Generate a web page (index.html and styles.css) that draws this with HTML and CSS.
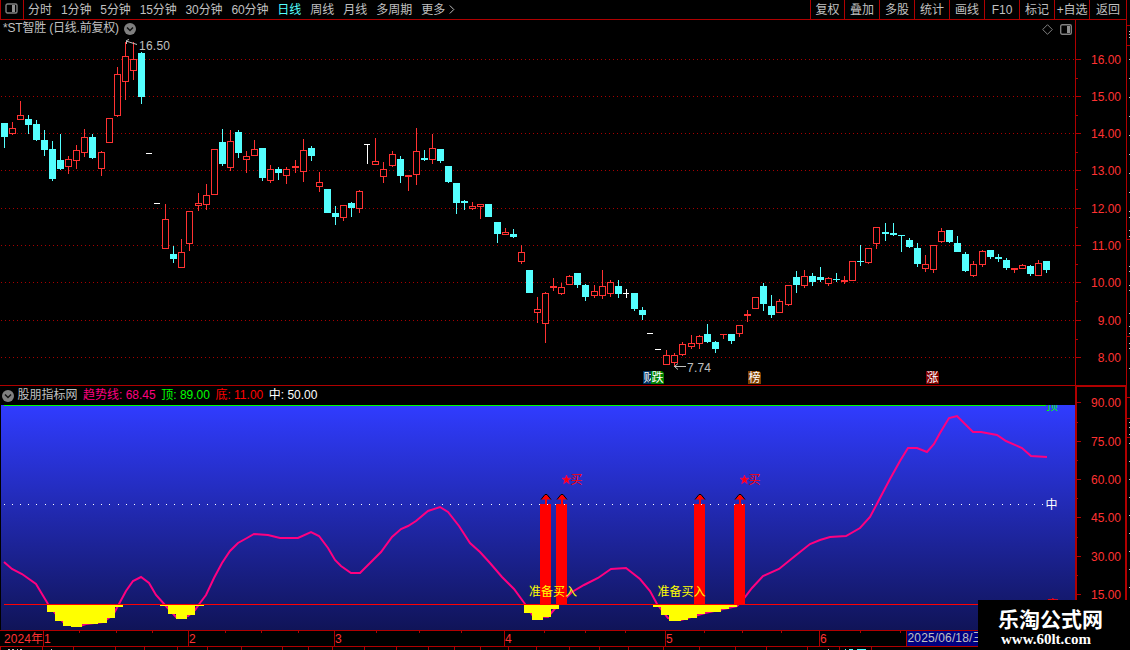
FILE: index.html
```html
<!DOCTYPE html>
<html lang="zh-CN">
<head>
    <meta charset="UTF-8">
    <meta name="viewport" content="width=device-width, initial-scale=1.0">
    <title>*ST智胜 日线</title>
    <link rel="stylesheet" href="styles.css">
</head>
<body>
    <div class="terminal">
        <div class="main">
            <div class="toolbar">
                <div class="layout-toggle">
                    <svg width="13" height="11" viewBox="0 0 13 11"><rect x="1" y="1" width="11" height="9" rx="1.5" fill="none" stroke="#808080" stroke-width="1.4"/><rect x="7" y="2" width="3" height="7" fill="#909090"/></svg>
                </div>
                <div class="periods">
                    <span>分时</span>
                    <span class="minutes">1分钟</span>
                    <span class="minutes">5分钟</span>
                    <span class="minutes">15分钟</span>
                    <span class="minutes">30分钟</span>
                    <span class="minutes">60分钟</span>
                    <span class="active">日线</span>
                    <span>周线</span>
                    <span>月线</span>
                    <span>多周期</span>
                    <span class="more">更多<svg width="6" height="9" viewBox="0 0 6 9"><path d="M0.8 0.5L4.8 4.5L0.8 8.5" fill="none" stroke="#c0c0c0"/></svg></span>
                </div>
                <div class="tools">
                    <span>复权</span>
                    <span>叠加</span>
                    <span>多股</span>
                    <span>统计</span>
                    <span>画线</span>
                    <span>F10</span>
                    <span>标记</span>
                    <span class="add">+自选</span>
                    <span>返回</span>
                </div>
            </div>

            <div class="panel price">
                <div class="plot">
                    <div class="title">
                        <span class="stock">*ST智胜 (日线.前复权)</span>
                        <svg class="drop" width="12" height="12" viewBox="0 0 12 12"><circle cx="6" cy="6" r="6" fill="#808080"/><path d="M3 4.5L6 7.5L9 4.5" fill="none" stroke="#111" stroke-width="1.5"/></svg>
                        <div class="corner">
                            <svg width="11" height="11" viewBox="0 0 11 11"><path d="M5.5 0.7L10.3 5.5L5.5 10.3L0.7 5.5Z" fill="none" stroke="#808080"/></svg>
                            <svg width="12" height="11" viewBox="0 0 12 11"><rect x="0.7" y="0.7" width="10.6" height="9.6" rx="1.5" fill="none" stroke="#808080" stroke-width="1.4"/><rect x="7" y="2" width="3" height="7" fill="#909090"/></svg>
                        </div>
                    </div>
                    <svg id="candles" width="1075" height="347" viewBox="0 38 1075 347"></svg>
                </div>
                <svg id="price-axis" class="axis" width="51" height="365" viewBox="1075 20 51 365"></svg>
            </div>

            <div class="panel indicator">
                <div class="plot">
                    <div class="legend">
                        <svg class="drop" width="12" height="12" viewBox="0 0 12 12"><circle cx="6" cy="6" r="6" fill="#808080"/><path d="M3 4.5L6 7.5L9 4.5" fill="none" stroke="#111" stroke-width="1.5"/></svg>
                        <span class="name">股朋指标网</span>
                        <span class="trend">趋势线: 68.45</span>
                        <span class="top">顶: 89.00</span>
                        <span class="bottom">底: 11.00</span>
                        <span class="middle">中: 50.00</span>
                    </div>
                    <svg id="trend" width="1075" height="225" viewBox="0 405 1075 225"></svg>
                </div>
                <svg id="trend-axis" class="axis" width="51" height="245" viewBox="1075 385 51 245"></svg>
            </div>

            <svg id="dates" width="1126" height="20" viewBox="0 630 1126 20"></svg>
        </div>
        <svg id="edge" width="4" height="650" viewBox="1126 0 4 650"></svg>

        <div class="watermark">
            <div class="site-name">乐淘公式网</div>
            <div class="site-url">www.60lt.com</div>
        </div>
    </div>
    <script src="chart.js"></script>
</body>
</html>
```
FILE: styles.css
```css
body {
    margin: 0;
    background-color: #000;
    color: #c0c0c0;
    font-family: "Liberation Sans", "Noto Sans CJK SC", sans-serif;
    font-size: 12px;
    overflow: hidden;
}
svg {
    display: block;
    flex: none;
}
svg text {
    font-family: "Liberation Sans", "Noto Sans CJK SC", sans-serif;
    font-size: 12px;
}
.terminal {
    position: relative;
    display: flex;
    width: 1130px;
    height: 650px;
    overflow: hidden;
}
.main {
    display: flex;
    flex-direction: column;
    width: 1126px;
}
.toolbar {
    display: flex;
    box-sizing: border-box;
    height: 20px;
    line-height: 20px;
    border-bottom: 1px solid #b00000;
    white-space: nowrap;
}
.layout-toggle {
    box-sizing: border-box;
    width: 24px;
    padding: 3px 0 0 4px;
    border-left: 1px solid #b00000;
    border-right: 1px solid #b00000;
}
.periods {
    display: flex;
    gap: 9px;
    padding-left: 4px;
}
.minutes {
    letter-spacing: -0.12px;
}
.periods .active {
    color: #54ffff;
}
.more {
    display: flex;
    align-items: center;
    gap: 4px;
}
.tools {
    display: flex;
    margin-left: auto;
}
.tools span {
    box-sizing: border-box;
    width: 35px;
    border-left: 1px solid #b00000;
    text-align: center;
}
.tools span:first-child {
    width: 34px;
}
.tools span:last-child {
    width: 37px;
}
.tools .add {
    letter-spacing: -0.2px;
}
.panel {
    display: flex;
}
.price {
    height: 365px;
    border-bottom: 1px solid #b00000;
}
.indicator {
    height: 244px;
}
.indicator .axis {
    margin-top: -1px;
}
.title {
    display: flex;
    align-items: center;
    height: 18px;
    padding-left: 3px;
    gap: 5px;
    line-height: 16px;
}
.stock {
    width: 116px;
    padding-bottom: 2px;
    letter-spacing: -0.2px;
    white-space: nowrap;
}
.corner {
    display: flex;
    gap: 7px;
    margin-left: auto;
    padding-right: 3px;
}
.legend {
    display: flex;
    align-items: center;
    height: 19px;
    padding: 0 0 0 2px;
    line-height: 17px;
    gap: 5.5px;
    white-space: nowrap;
}
.legend .name {
    margin-left: -2px;
}
.legend .trend {
    color: #ff0080;
}
.legend .top {
    color: #00ff00;
}
.legend .bottom {
    color: #ff0000;
}
.legend .middle {
    color: #fff;
}
.watermark {
    position: absolute;
    right: 0;
    bottom: 0;
    box-sizing: border-box;
    width: 152px;
    height: 50px;
    padding: 6px 0 0 20px;
    background-color: #000;
    color: #fff;
    font-weight: bold;
}
.site-name {
    font-family: "Noto Sans CJK SC", sans-serif;
    font-size: 21px;
    line-height: 24px;
}
.site-url {
    padding-left: 3px;
    font-family: "Liberation Serif", serif;
    font-size: 15px;
    line-height: 18px;
}
```
FILE: chart.js
```js
const RED = '#ff3232';
const CYAN = '#54ffff';
const LINE = '#b00000';

// x, high, body top, body bottom, low, direction (u = up, d = down)
const candles = [
    [1,123,123,137,148,'d'], [9,122,128,134,135,'u'], [17,101,115,120,120,'u'], [25,115,119,125,134,'d'],
    [33,120,124,140,141,'d'], [41,130,140,150,156,'d'], [49,141,149,179,181,'d'], [57,134,160,169,170,'d'],
    [65,156,159,167,174,'u'], [73,145,150,161,169,'u'], [81,129,137,153,157,'u'], [89,134,137,158,159,'d'],
    [98,151,152,169,176,'u'], [106,118,118,143,143,'u'], [114,67,74,116,117,'u'], [122,42,56,82,100,'u'],
    [130,42,59,71,80,'u'], [138,52,53,97,104,'d'], [162,204,219,249,249,'u'], [170,246,254,259,263,'d'],
    [178,239,252,268,268,'u'], [186,211,211,244,251,'u'], [195,193,203,206,211,'u'], [203,184,195,205,210,'u'],
    [211,149,149,195,195,'u'], [219,129,142,164,166,'d'], [227,130,141,168,171,'u'], [235,130,132,153,158,'d'],
    [243,151,156,160,173,'u'], [251,140,149,156,156,'u'], [259,148,148,178,181,'d'], [267,165,169,181,183,'u'],
    [275,167,169,173,180,'d'], [283,167,169,176,184,'u'], [292,160,166,168,173,'u'], [300,139,150,172,182,'u'],
    [308,146,148,156,161,'d'], [316,172,182,187,192,'u'], [324,189,189,213,213,'d'], [332,206,213,217,225,'d'],
    [340,205,205,218,221,'u'], [348,202,203,208,217,'d'], [356,190,191,209,213,'u'], [372,138,161,165,165,'u'],
    [380,162,169,177,183,'u'], [389,151,154,166,167,'u'], [397,156,159,176,183,'d'], [405,175,175,177,191,'u'],
    [413,128,151,175,185,'u'], [421,150,158,160,161,'d'], [429,134,148,160,164,'u'], [437,149,149,161,163,'d'],
    [445,166,166,182,183,'d'], [453,183,183,203,214,'d'], [461,200,201,203,210,'d'], [469,202,206,209,210,'u'],
    [477,204,204,207,219,'u'], [485,204,204,217,217,'d'], [494,222,222,234,243,'d'], [502,228,232,235,235,'u'],
    [510,229,234,237,238,'d'], [518,245,252,262,264,'u'], [526,270,270,293,293,'d'], [534,297,309,313,323,'u'],
    [542,292,293,324,343,'u'], [550,278,286,288,291,'u'], [558,283,287,294,295,'u'], [566,275,276,285,285,'u'],
    [574,273,273,285,288,'d'], [582,284,285,297,301,'d'], [591,285,291,296,298,'u'], [599,270,286,296,299,'u'],
    [607,280,282,294,297,'u'], [615,280,286,294,298,'d'], [631,293,293,309,311,'d'], [639,307,310,315,320,'d'],
    [663,350,355,365,365,'u'], [671,353,355,363,366,'u'], [679,342,344,355,356,'u'], [688,335,343,347,349,'u'],
    [696,335,336,344,349,'u'], [704,324,334,342,343,'d'], [712,341,342,349,353,'d'], [720,334,334,335,339,'u'],
    [728,334,334,341,344,'d'], [736,325,325,334,337,'u'], [744,310,314,316,322,'u'], [752,297,297,309,309,'u'],
    [760,283,286,304,311,'d'], [768,295,306,315,318,'d'], [776,299,301,313,313,'u'], [785,285,285,305,306,'u'],
    [793,271,277,285,293,'d'], [801,270,276,286,288,'u'], [809,273,276,282,286,'d'], [817,267,277,280,282,'d'],
    [825,277,278,284,286,'u'], [833,273,279,280,282,'d'], [841,276,280,282,284,'u'], [849,261,261,281,281,'u'],
    [857,245,261,262,266,'d'], [865,248,248,263,264,'u'], [873,227,227,244,249,'u'], [882,223,232,234,241,'d'],
    [890,223,233,235,236,'d'], [898,235,235,236,252,'d'], [906,238,240,247,248,'d'], [914,243,248,264,267,'d'],
    [922,255,264,269,272,'u'], [930,245,245,270,273,'u'], [938,228,231,242,243,'u'], [946,230,230,242,243,'d'],
    [954,236,243,252,252,'d'], [962,252,254,271,272,'d'], [970,261,264,276,277,'u'], [979,250,251,265,267,'u'],
    [987,250,250,257,259,'d'], [995,254,257,259,262,'d'], [1003,258,260,268,270,'d'], [1011,268,268,270,273,'u'],
    [1019,264,265,269,269,'u'], [1027,265,266,274,276,'d'], [1035,260,263,276,276,'u'], [1043,261,261,270,273,'d']
];

// days that opened and closed at the same price: x, y, stem top, stem bottom
const flats = [
    [146,153,153,153], [154,203,203,203], [364,144,144,164],
    [623,293,289,298], [647,333,333,333], [655,349,349,349]
];

const trend = [
    [4,562],[12,569],[22,574],[36,584],[42,594],[48,604],[55,613],[65,624],[80,626],[86,624],[103,622],[113,615],
    [119,604],[126,591],[133,581],[141,577],[149,583],[156,595],[165,605],[176,617],[188,616],[195,610],[200,603],
    [206,595],[214,578],[222,563],[230,551],[238,543],[247,538],[254,534],[268,535],[280,538],[298,538],[311,532],
    [319,536],[328,548],[335,560],[341,566],[351,573],[360,573],[372,561],[381,552],[392,537],[401,529],[408,526],
    [416,521],[428,511],[440,507],[448,512],[459,526],[470,543],[480,552],[490,563],[502,577],[514,589],[525,604],
    [533,616],[548,617],[558,605],[567,597],[572,592],[584,585],[598,578],[611,569],[626,568],[640,579],[650,591],
    [657,604],[668,618],[681,620],[705,613],[737,606],[745,597],[752,588],[763,576],[779,569],[795,556],[810,544],
    [820,540],[830,537],[846,536],[860,528],[870,517],[880,498],[890,479],[900,461],[908,448],[917,448],[927,452],
    [934,444],[940,433],[949,418],[957,416],[965,424],[973,432],[981,432],[997,435],[1006,441],[1022,448],[1031,456],[1047,457]
];

// oversold area: left, right, bottom
const lows = [
    [47,55,612],[55,63,621],[63,71,626],[71,82,627],[82,98,624],[98,107,623],[107,115,618],[115,123,607],
    [160,168,606],[168,176,614],[176,187,619],[187,195,615],[195,204,606],
    [524,532,613],[532,543,620],[543,551,617],[551,559,609],
    [653,661,607],[661,669,615],[669,681,621],[681,688,620],[688,697,618],[697,705,614],[705,721,612],[721,729,609],[729,737,607]
];

function rect(x, y, w, h, color) {
    return `<rect x="${x}" y="${y}" width="${w}" height="${h}" fill="${color}" shape-rendering="crispEdges"/>`;
}

function text(x, y, str, color, extra = '') {
    return `<text x="${x}" y="${y}" fill="${color}" ${extra}>${str}</text>`;
}

function fill(id, parts) {
    document.getElementById(id).innerHTML = parts.join('');
}

function drawCandles() {
    const out = [];
    [59, 96, 133, 170, 208, 245, 282, 320, 357].forEach(y => {
        out.push(`<path d="M1 ${y}.5H1075" stroke="#a80000" stroke-dasharray="1 3" shape-rendering="crispEdges"/>`);
    });
    candles.forEach(([x, high, top, bottom, low, dir]) => {
        const color = dir === 'u' ? RED : CYAN;
        out.push(rect(x + 3, high, 1, top - high, color));
        out.push(rect(x + 3, bottom, 1, low - bottom, color));
        if (dir === 'u' && bottom - top > 2) {
            out.push(`<rect x="${x + 0.5}" y="${top + 0.5}" width="6" height="${bottom - top - 1}" fill="#000" stroke="${RED}"/>`);
        } else {
            out.push(rect(x, top, 7, bottom - top, color));
        }
    });
    flats.forEach(([x, y, top, bottom]) => {
        out.push(rect(x, y, 6, 1, '#fff'));
        out.push(rect(x + 3, top, 1, bottom - top, '#fff'));
    });

    out.push('<path d="M137 44.5L126 41M126.5 44V40.5L129 39.5" fill="none" stroke="#c0c0c0"/>');
    out.push(text(139, 50, '16.50', '#c0c0c0', 'textLength="31"'));
    out.push('<path d="M686 366.5H674M678 363.5L674.5 366.5L678 369.5" fill="none" stroke="#c0c0c0"/>');
    out.push(text(687, 372, '7.74', '#c0c0c0', 'textLength="24"'));

    // event badges
    [[643, '财', '#003060'], [651, '跌', '#008000'], [748, '榜', '#804000'], [926, '涨', '#800000']].forEach(([x, str, color]) => {
        out.push(`<path d="M${x} 371h11l2 2v11h-13z" fill="${color}"/>`);
        out.push(text(x + 0.5, 382, str, '#fff'));
    });
    fill('candles', out);
}

function drawAxis(id, labels, ticks) {
    const out = [];
    labels.forEach(([y, str]) => {
        out.push(rect(1076, y, 5, 1, LINE));
        out.push(text(1121, y + 5, str, RED, 'text-anchor="end"'));
    });
    ticks.forEach(y => out.push(rect(1076, y, 2, 1, LINE)));
    if (id === 'price-axis') {
        out.push(rect(1075, 20, 1, 365, LINE));
    } else {
        out.push(`<path d="M1076 630V386H1126V630" fill="none" stroke="${LINE}" stroke-width="2"/>`);
    }
    fill(id, out);
}

function drawTrend() {
    const out = [`<defs><linearGradient id="sky" x1="0" y1="0" x2="0" y2="1">
        <stop offset="0" stop-color="#303cff"/><stop offset="1" stop-color="#101458"/>
    </linearGradient></defs>`];
    out.push(rect(1, 405, 1074, 225, 'url(#sky)'));
    out.push(rect(4, 405, 1042, 1, '#00ff00'));
    out.push(`<polyline points="${trend.join(' ')}" fill="none" stroke="#ff0080" stroke-width="2"/>`);
    lows.forEach(([x1, x2, y]) => out.push(rect(x1, 605, x2 - x1, y - 605, '#ffff00')));
    [[540, 546], [556, 562], [694, 700], [734, 740]].forEach(([x, c]) => {
        out.push(rect(x, 504, 11, 100, '#ff0000'));
        out.push(rect(c - 1, 499, 2, 5, '#ff0000'));
        out.push(`<path d="M${c - 5} 499.5L${c - 1} 494.5H${c + 1}L${c + 5} 499.5Z" fill="#ff0000"/>`);
        out.push(`<path d="M${c - 5} 499.5L${c - 1} 494.5H${c + 1}L${c + 5} 499.5" fill="none" stroke="#000"/>`);
    });
    for (let i = 0; i < 129; i++) {
        out.push(rect(Math.round(4 + i * 8.11), 504, 1, 1, '#fff'));
    }
    out.push(rect(4, 604, 1043, 1, '#ff0000'));
    [566.5, 744.5].forEach(x => {
        out.push(`<path transform="translate(${x} 479.5)" d="M0 -4.5L1.2 -1.3H4.5L1.8 0.8L2.8 4.2L0 2.2L-2.8 4.2L-1.8 0.8L-4.5 -1.3H-1.2Z" fill="#ff0000" stroke="#ff0080" stroke-width="0.6"/>`);
        out.push(text(x + 4, 484, '买', '#ff0000'));
    });
    out.push(text(529, 596, '准备买入', '#ffff00'));
    out.push(text(657.5, 596, '准备买入', '#ffff00'));
    out.push(text(1046, 410, '顶', '#00ff00'));
    out.push(text(1045.5, 508.5, '中', '#fff'));
    out.push(text(1046, 609, '底', '#ff0000'));
    fill('trend', out);
}

function drawDates() {
    const out = [rect(0, 630, 1126, 1, LINE), rect(0, 646, 1126, 1, LINE)];
    out.push(rect(907, 631, 160, 15, '#000080'));
    [43, 188, 334, 504, 665, 819, 906].forEach(x => out.push(rect(x, 631, 1, 15, LINE)));
    [79, 116, 152, 225, 261, 298, 376, 419, 461, 544, 585, 625, 704, 742, 781, 860, 900].forEach(x => out.push(rect(x, 631, 1, 2, LINE)));
    out.push(text(4, 643, '2024年', RED, 'textLength="39"'));
    [[44, 1], [189, 2], [335, 3], [505, 4], [666, 5], [820, 6]].forEach(([x, month]) => out.push(text(x, 643, month, RED)));
    out.push(text(907.5, 642, '2025/06/18/三', '#c0c0c0', 'textLength="77"'));

    // top edge of the quote bar under the chart
    [0, 42, 73, 115, 144, 177, 207, 241, 282, 308, 332, 364, 396, 428, 454, 480, 508, 536, 569, 599, 628, 663, 699, 735, 766, 807, 839, 871].forEach(x => {
        out.push(rect(x, 647, 1, 3, LINE));
    });
    [[8, 2], [12, 2], [17, 1], [20, 2], [51, 1], [828, 1]].forEach(([x, w]) => out.push(rect(x, 649, w, 1, '#c0c0c0')));
    [[845, 1], [849, 4], [857, 9]].forEach(([x, w]) => out.push(rect(x, 649, w, 1, CYAN)));
    fill('dates', out);
}

function drawEdge() {
    const out = [rect(0 + 1126, 0, 1, 650, LINE)];
    [25, 45, 239, 336, 397, 418, 437].forEach(y => out.push(rect(1127, y, 3, 1, LINE)));
    [31, 34, 37, 59, 78, 97, 116, 135, 154, 173, 192, 211, 217, 230, 236, 266, 271, 285, 290, 313, 326, 333, 343, 348, 368,
        422, 427, 434, 443, 461, 479, 497, 515, 533, 551, 569, 587].forEach(y => out.push(rect(1129, y, 1, 1, '#c0c0c0')));
    fill('edge', out);
}

drawCandles();
drawAxis('price-axis',
    [[59, '16.00'], [96, '15.00'], [133, '14.00'], [170, '13.00'], [208, '12.00'], [245, '11.00'], [282, '10.00'], [320, '9.00'], [357, '8.00']],
    [78, 115, 152, 189, 227, 264, 301, 339]);
drawTrend();
drawAxis('trend-axis',
    [[402, '90.00'], [441, '75.00'], [479, '60.00'], [517, '45.00'], [556, '30.00'], [594, '15.00']],
    [422, 460, 498, 537, 575]);
drawDates();
drawEdge();
```
